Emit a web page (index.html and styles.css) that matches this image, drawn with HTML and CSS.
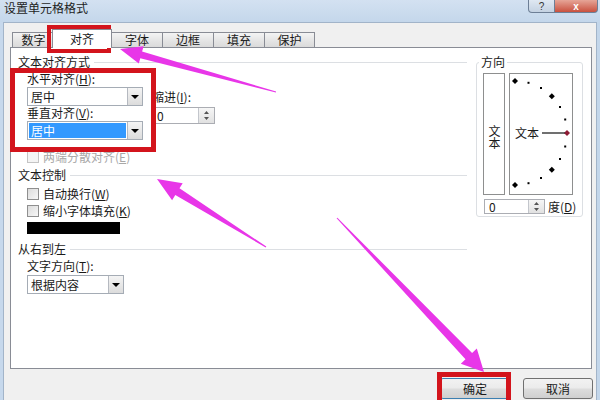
FILE: index.html
```html
<!DOCTYPE html>
<html lang="zh-CN">
<head>
    <meta charset="UTF-8">
    <title>设置单元格格式</title>
    <link rel="stylesheet" href="styles.css">
</head>
<body>
    <div class="window">
        <div class="titlebar">
            <span class="title">设置单元格格式</span>
            <div class="caption-btns">
                <span class="cap-help">?</span>
                <span class="cap-close">x</span>
            </div>
        </div>

        <div class="dialog">
            <div class="tabs">
                <div class="tab tab-first">数字</div>
                <div class="tab active">对齐</div>
                <div class="tab">字体</div>
                <div class="tab">边框</div>
                <div class="tab">填充</div>
                <div class="tab tab-last">保护</div>
            </div>

            <div class="panel">
                <div class="left">
                    <div class="group-title">文本对齐方式</div>
                    <div class="align-row">
                        <div class="align-main">
                            <div class="label">水平对齐(<u>H</u>):</div>
                            <div class="combo">
                                <span class="combo-text">居中</span>
                                <span class="drop"></span>
                            </div>
                            <div class="label v-label">垂直对齐(<u>V</u>):</div>
                            <div class="combo">
                                <span class="combo-text selected">居中</span>
                                <span class="drop"></span>
                            </div>
                        </div>
                        <div class="indent">
                            <div class="label">缩进(<u>I</u>):</div>
                            <div class="spin">
                                <span class="spin-text">0</span>
                                <span class="spin-btn">
                                    <svg width="9" height="13" viewBox="0 0 9 13"><path d="M4.5 2 L7 5 H2 Z M4.5 11 L7 8 H2 Z" fill="#555"/></svg>
                                </span>
                            </div>
                        </div>
                    </div>
                    <div class="check disabled"><span class="box"></span>两端分散对齐(<u>E</u>)</div>

                    <div class="group-title t-control">文本控制</div>
                    <div class="check c-first"><span class="box"></span>自动换行(<u>W</u>)</div>
                    <div class="check c-next"><span class="box"></span>缩小字体填充(<u>K</u>)</div>
                    <div class="redacted"></div>

                    <div class="group-title t-rtl">从右到左</div>
                    <div class="label dir-label">文字方向(<u>T</u>):</div>
                    <div class="combo combo-small">
                        <span class="combo-text">根据内容</span>
                        <span class="drop"></span>
                    </div>
                </div>

                <fieldset class="orient">
                    <legend>方向</legend>
                    <div class="orient-boxes">
                        <div class="vtext"><span class="vtext-inner">文本</span></div>
                        <div class="dial">
                            <svg width="62" height="120" viewBox="0 0 62 120">
                                <g fill="#000">
                                    <path d="M5 4 L8 7 L5 10 L2 7 Z"/>
                                    <rect x="17.5" y="7.8" width="2" height="2"/>
                                    <rect x="30" y="13" width="2" height="2"/>
                                    <path d="M41.8 19.2 L44.8 22.2 L41.8 25.2 L38.8 22.2 Z"/>
                                    <rect x="49" y="32" width="2" height="2"/>
                                    <rect x="54.2" y="44.5" width="2" height="2"/>
                                    <rect x="54.2" y="71.5" width="2" height="2"/>
                                    <rect x="49" y="84" width="2" height="2"/>
                                    <path d="M41.8 92.8 L44.8 95.8 L41.8 98.8 L38.8 95.8 Z"/>
                                    <rect x="30" y="103" width="2" height="2"/>
                                    <rect x="17.5" y="108.2" width="2" height="2"/>
                                    <path d="M5 108 L8 111 L5 114 L2 111 Z"/>
                                </g>
                                <path d="M57 56 L60 59 L57 62 L54 59 Z" fill="#8e1b34"/>
                                <line x1="32" y1="59" x2="55" y2="59" stroke="#222" stroke-width="1.3"/>
                                <text x="5" y="63.5" class="dial-text">文本</text>
                            </svg>
                        </div>
                    </div>
                    <div class="degree-row">
                        <div class="spin spin-deg">
                            <span class="spin-text">0</span>
                            <span class="spin-btn">
                                <svg width="9" height="13" viewBox="0 0 9 13"><path d="M4.5 2 L7 5 H2 Z M4.5 11 L7 8 H2 Z" fill="#555"/></svg>
                            </span>
                        </div>
                        <span class="deg-label">度(<u>D</u>)</span>
                    </div>
                </fieldset>
            </div>

            <div class="footer">
                <button class="btn btn-ok">确定</button>
                <button class="btn">取消</button>
            </div>
        </div>

        <div class="annotations">
            <div class="mark mark-tab"></div>
            <div class="mark mark-align"></div>
            <div class="mark mark-ok"></div>
            <svg class="arrows" width="600" height="400" viewBox="0 0 600 400">
                <polygon points="120,49 143.6,46.2 142.1,51.5 276.1,91.5 275.9,92.5 140.3,58.3 138.8,63.6"/>
                <polygon points="157,179 182.7,183.2 179.5,188.3 266.3,246.6 265.7,247.4 175.3,195.1 172.1,200.2"/>
                <polygon points="484,372 460.8,363.7 465.5,359.2 336.6,218.3 337.4,217.7 472.1,353 476.8,348.5"/>
            </svg>
        </div>
    </div>
</body>
</html>
```

FILE: styles.css
```css
* {
    box-sizing: border-box;
}

body {
    margin: 0;
    font-family: "Noto Sans CJK SC", "Liberation Sans", sans-serif;
    font-size: 12px;
    color: #1a1a1a;
}

u {
    text-decoration: underline;
}

.window {
    position: relative;
    width: 600px;
    height: 400px;
    overflow: hidden;
    background: linear-gradient(90deg, #c6d8ec, #d6e3f1 40%, #c3d6ea);
}

.titlebar {
    display: flex;
    height: 22px;
    padding: 1px 2px 0 4px;
    background: linear-gradient(180deg, #d3e1f1, #c4d7eb);
}

.title {
    line-height: 14px;
    font-size: 12px;
    color: #1e1e1e;
}

.caption-btns {
    display: flex;
    margin-left: auto;
    margin-top: -1px;
    height: 13px;
}

.cap-help,
.cap-close {
    display: flex;
    align-items: center;
    justify-content: center;
    height: 13px;
    border: 1px solid #6d7f96;
    border-top: none;
    font-family: "Liberation Sans", sans-serif;
    font-size: 10px;
    line-height: 11px;
}

.cap-help {
    width: 27px;
    border-radius: 0 0 0 4px;
    background: linear-gradient(180deg, #dfe8f2, #c4d2e2);
    color: #333;
}

.cap-close {
    width: 43px;
    border-left: none;
    border-radius: 0 0 4px 0;
    background: linear-gradient(180deg, #e6a597, #c9513f);
    color: #fff;
    font-weight: bold;
}

.dialog {
    margin: 0 3px;
    height: 378px;
    background: #f0f0f0;
    border: 1px solid #a2b4c9;
    border-bottom: none;
}

.tabs {
    display: flex;
    align-items: flex-end;
    height: 24px;
    padding: 6px 0 0 8px;
}

.tab {
    height: 15px;
    margin-left: -1px;
    border: 1px solid #898c95;
    border-bottom: none;
    background: linear-gradient(180deg, #f4f4f4, #e6e6e6 50%, #dadada);
    text-align: center;
    line-height: 14px;
    width: 52px;
}

.tab-first {
    margin-left: 0;
    width: 43px;
}

.tab-last {
    width: 51px;
}

.tab.active {
    position: relative;
    z-index: 1;
    height: 19px;
    width: 60px;
    margin-left: -3px;
    margin-bottom: -1px;
    padding-top: 2px;
    background: #fff;
}

.panel {
    display: flex;
    height: 322px;
    margin: 0 4px 0 6px;
    border: 1px solid #898c95;
    background: #fff;
}

.left {
    width: 456px;
}

.group-title {
    display: flex;
    align-items: center;
    margin-top: 8px;
    padding-left: 7px;
    line-height: 12px;
}

.group-title::after {
    content: "";
    flex: 1;
    height: 1px;
    margin-left: 4px;
    background: #dcdfe3;
}

.t-control {
    margin-top: 5px;
}

.t-rtl {
    margin-top: 9px;
}

.label {
    line-height: 12px;
}

.align-row {
    display: flex;
    margin-top: 5px;
    padding-left: 16px;
}

.align-main {
    width: 116px;
}

.v-label {
    margin-top: 1px;
}

.combo {
    display: flex;
    align-items: center;
    width: 116px;
    height: 19px;
    margin-top: 2px;
    border: 1px solid #a5acb5;
    background: #fff;
}

.combo-text {
    flex: 1;
    height: 15px;
    margin: 0 1px 0 1px;
    padding-left: 2px;
    line-height: 15px;
}

.combo-text.selected {
    background: #3399ff;
    color: #fff;
}

.drop {
    position: relative;
    width: 15px;
    height: 17px;
    border-left: 1px solid #b5b9c0;
    background: linear-gradient(180deg, #f4f4f4, #dcdcdc);
}

.drop::after {
    content: "";
    position: absolute;
    left: 3px;
    top: 7px;
    border-left: 4px solid transparent;
    border-right: 4px solid transparent;
    border-top: 4px solid #000;
}

.indent {
    margin-left: 9px;
}

.indent .label {
    margin-top: 18px;
}

.spin {
    display: flex;
    align-items: center;
    width: 63px;
    height: 17px;
    margin-top: 4px;
    border: 1px solid #abadb3;
    background: #fff;
}

.spin-text {
    flex: 1;
    padding-left: 4px;
    line-height: 14px;
}

.spin-btn {
    display: flex;
    align-items: center;
    justify-content: center;
    width: 16px;
    height: 15px;
    border-left: 1px solid #c3c6cc;
    background: linear-gradient(180deg, #f6f6f6, #e1e1e1);
}

.check {
    display: flex;
    align-items: center;
    height: 14px;
    margin-left: 16px;
    line-height: 14px;
}

.check .box {
    width: 12px;
    height: 12px;
    margin-right: 4px;
    border: 1px solid #8f8f8f;
    background: linear-gradient(135deg, #dcdcdc, #f7f7f7);
}

.check.disabled {
    margin-top: 10px;
    color: #a8a8a8;
}

.check.disabled .box {
    border-color: #c4c4c4;
    background: #f4f4f4;
}

.c-first {
    margin-top: 6px;
}

.c-next {
    margin-top: 3px;
}

.redacted {
    width: 93px;
    height: 12px;
    margin: 4px 0 0 16px;
    background: #000;
}

.dir-label {
    margin: 5px 0 0 16px;
}

.combo-small {
    width: 97px;
    margin: 3px 0 0 16px;
}

.orient {
    width: 107px;
    height: 161px;
    margin: 8px 0 0 9px;
    padding: 5px 0 3px 6px;
    border: 1px solid #dcdfe3;
    border-radius: 3px;
    min-width: 0;
}

.orient legend {
    margin-left: -4px;
    padding: 0 2px;
    line-height: 12px;
}

.orient-boxes {
    display: flex;
    gap: 4px;
}

.vtext {
    display: flex;
    align-items: center;
    justify-content: center;
    width: 22px;
    height: 122px;
    padding-top: 6px;
    border: 1px solid #8e8f8f;
}

.vtext-inner {
    writing-mode: vertical-rl;
    text-orientation: upright;
    line-height: 14px;
}

.dial {
    width: 64px;
    height: 122px;
    border: 1px solid #8e8f8f;
}

.dial svg {
    display: block;
}

.dial-text {
    font-family: "Noto Sans CJK SC", sans-serif;
    font-size: 12px;
    fill: #1a1a1a;
}

.degree-row {
    display: flex;
    align-items: center;
    margin-top: 4px;
}

.spin-deg {
    width: 61px;
    height: 15px;
    margin: 0 0 0 1px;
}

.spin-deg .spin-btn {
    height: 13px;
}

.deg-label {
    margin-left: 3px;
    line-height: 12px;
}

.footer {
    display: flex;
    justify-content: flex-end;
    gap: 13px;
    padding: 9px 3px 0 0;
}

.btn {
    width: 70px;
    height: 21px;
    padding: 0;
    border: 1px solid #707070;
    border-radius: 3px;
    background: linear-gradient(180deg, #f2f2f2, #ebebeb 48%, #dddddd 52%, #cfcfcf);
    font-family: inherit;
    font-size: 12px;
    color: #1a1a1a;
}

.btn-ok {
    border-color: #3c7fb1;
}

.annotations {
    position: absolute;
    inset: 0;
    pointer-events: none;
}

.mark {
    position: absolute;
    border: 4px solid #d3141c;
}

.mark-tab {
    left: 47px;
    top: 25px;
    width: 64px;
    height: 28px;
}

.mark-align {
    left: 10px;
    top: 68px;
    width: 146px;
    height: 84px;
    border-width: 5px;
}

.mark-ok {
    left: 437px;
    top: 372px;
    width: 74px;
    height: 34px;
    border-width: 5px;
}

.arrows {
    position: absolute;
    left: 0;
    top: 0;
}

.arrows polygon {
    fill: #e836e8;
}
```
